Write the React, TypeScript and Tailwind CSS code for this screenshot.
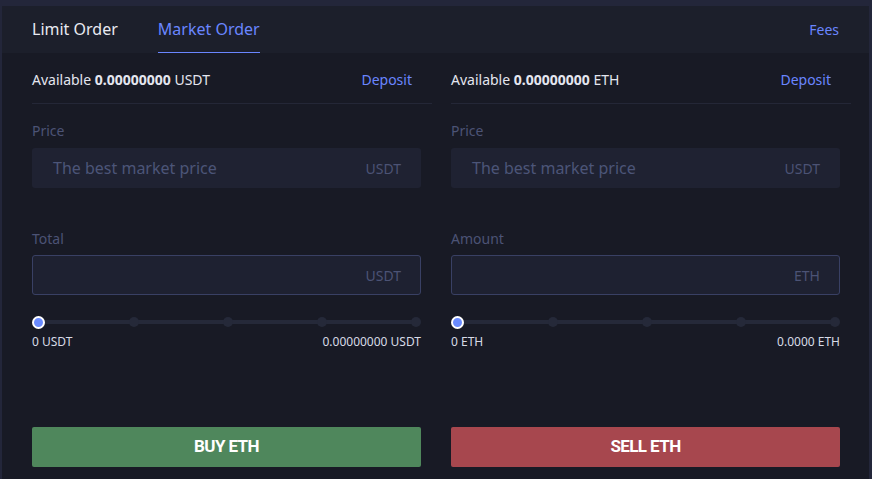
import React from 'react';

type Side = {
    asset: string;
    fieldLabel: string;
    fieldUnit: string;
    minLabel: string;
    maxLabel: string;
    action: string;
    buy: boolean;
};

const sides: Side[] = [
    {
        asset: 'USDT',
        fieldLabel: 'Total',
        fieldUnit: 'USDT',
        minLabel: '0 USDT',
        maxLabel: '0.00000000 USDT',
        action: 'BUY ETH',
        buy: true,
    },
    {
        asset: 'ETH',
        fieldLabel: 'Amount',
        fieldUnit: 'ETH',
        minLabel: '0 ETH',
        maxLabel: '0.0000 ETH',
        action: 'SELL ETH',
        buy: false,
    },
];

const Slider: React.FC = () => (
    <div className="relative mt-[17px] h-[20px] w-full">
        <div className="absolute left-[6px] right-[6px] top-[8px] h-[4px] rounded-full bg-[#252939]" />
        <div className="absolute inset-x-0 top-0 flex h-[20px] items-center justify-between">
            <span className="h-[13px] w-[13px] rounded-full border-[2px] border-white bg-[#6a8bff]" />
            {[0, 1, 2, 3].map((i) => (
                <span key={i} className="h-[10px] w-[10px] rounded-full bg-[#252939]" />
            ))}
        </div>
    </div>
);

const OrderColumn: React.FC<{ side: Side }> = ({ side }) => (
    <div className="w-[400px]">
        <div className="flex h-[51px] items-center justify-between border-b border-[#242737] pr-[20px] pt-[2px] text-[14px]">
            <span className="text-[#e4e6ef]">
                Available <span className="font-bold">0.00000000</span> {side.asset}
            </span>
            <span className="text-[#6a86ff]">Deposit</span>
        </div>
        <div className="w-[389px]">
            <div className="mt-[18px] text-[14px] leading-[18px] text-[#4c5375]">Price</div>
            <div className="mt-[8px] flex h-[40px] items-center justify-between rounded-[3px] bg-[#1f2232] pl-[21px] pr-[20px]">
                <span className="text-[16px] text-[#4c5578]">The best market price</span>
                <span className="text-[14px] text-[#4c5375]">USDT</span>
            </div>
            <div className="mt-[42px] text-[14px] leading-[18px] text-[#4c5375]">{side.fieldLabel}</div>
            <div className="mt-[7px] flex h-[40px] items-center justify-end rounded-[3px] border border-[#394064] bg-[#1e2131] pr-[19px]">
                <span className="text-[14px] text-[#4c5375]">{side.fieldUnit}</span>
            </div>
            <Slider />
            <div className="mt-[2px] flex justify-between text-[12px] leading-[16px] text-[#d7dae6]">
                <span>{side.minLabel}</span>
                <span>{side.maxLabel}</span>
            </div>
            <button
                className={`mt-[77px] flex h-[40px] w-full items-center justify-center rounded-[2px] text-[17px] font-bold tracking-[-0.6px] text-white ${
                    side.buy ? 'bg-[#4f875c]' : 'bg-[#a7474e]'
                }`}
                style={{ fontFamily: '"Roboto", "Liberation Sans", sans-serif' }}
            >
                {side.action}
            </button>
        </div>
    </div>
);

const App: React.FC = () => {
    return (
        <div
            className="h-[479px] w-[872px] overflow-hidden bg-[#23263a] pl-[2px] pr-[3px] pt-[6px]"
            style={{ fontFamily: '"Noto Sans", "Open Sans", sans-serif' }}
        >
            <div className="flex h-full flex-col bg-[#181a25]">
                <div className="flex h-[47px] items-end justify-between bg-[#1c1f2b] pl-[30px] pr-[30px]">
                    <div className="flex gap-[40px]">
                        <div className="flex h-[47px] items-center border-b border-transparent text-[16px] text-[#e8eaf2]">
                            Limit Order
                        </div>
                        <div className="flex h-[47px] items-center border-b border-[#6a86ff] text-[16px] text-[#6a86ff]">
                            Market Order
                        </div>
                    </div>
                    <div className="flex h-[47px] items-center text-[14px] text-[#6a86ff]">Fees</div>
                </div>
                <div className="flex gap-[19px] pl-[30px]">
                    {sides.map((s) => (
                        <OrderColumn key={s.action} side={s} />
                    ))}
                </div>
            </div>
        </div>
    );
};

export default App;
